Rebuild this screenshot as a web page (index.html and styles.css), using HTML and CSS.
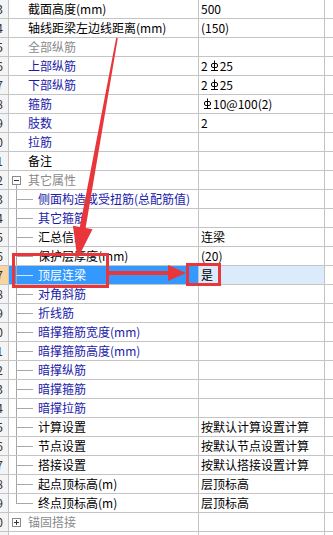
FILE: index.html
```html
<!DOCTYPE html>
<html lang="zh-CN">
<head>
    <meta charset="UTF-8">
    <meta name="viewport" content="width=device-width, initial-scale=1.0">
    <title>连梁属性</title>
    <link rel="stylesheet" href="styles.css">
</head>
<body>
    <div class="page">
        <div class="grid">
            <div class="row"><div class="num">3</div><div class="name">截面高度(mm)</div><div class="val">500</div><div></div></div>
            <div class="row"><div class="num">4</div><div class="name">轴线距梁左边线距离(mm)</div><div class="val">(150)</div><div></div></div>
            <div class="row gray"><div class="num">5</div><div class="name">全部纵筋</div><div class="val"></div><div></div></div>
            <div class="row blue"><div class="num">6</div><div class="name">上部纵筋</div><div class="val">2<svg class="bar" width="9" height="12" viewBox="0 0 9 12"><path d="M4.5 0.5v9.5M1 10.5h7"/><rect x="1.5" y="3.5" width="6" height="4" rx="1.5"/></svg>25</div><div></div></div>
            <div class="row blue"><div class="num">7</div><div class="name">下部纵筋</div><div class="val">2<svg class="bar" width="9" height="12" viewBox="0 0 9 12"><path d="M4.5 0.5v9.5M1 10.5h7"/><rect x="1.5" y="3.5" width="6" height="4" rx="1.5"/></svg>25</div><div></div></div>
            <div class="row blue"><div class="num">8</div><div class="name">箍筋</div><div class="val"><svg class="bar" width="9" height="12" viewBox="0 0 9 12"><path d="M4.5 0.5v9.5M1 10.5h7"/><rect x="1.5" y="3.5" width="6" height="4" rx="1.5"/></svg>10@100(2)</div><div></div></div>
            <div class="row blue"><div class="num">9</div><div class="name">肢数</div><div class="val">2</div><div></div></div>
            <div class="row blue"><div class="num">10</div><div class="name">拉筋</div><div class="val"></div><div></div></div>
            <div class="row"><div class="num">11</div><div class="name">备注</div><div class="val"></div><div></div></div>
            <div class="row gray group"><div class="num">12</div><div class="name"><span class="toggle"><i></i><svg width="9" height="9" viewBox="0 0 9 9"><rect x="0.5" y="0.5" width="8" height="8"/><path d="M2 4.5h5"/></svg><i class="down"></i></span>其它属性</div><div class="val"></div><div></div></div>
            <div class="row blue child"><div class="num">13</div><div class="name"><span class="branch"></span>侧面构造或受扭筋(总配筋值)</div><div class="val"></div><div></div></div>
            <div class="row blue child"><div class="num">14</div><div class="name"><span class="branch"></span>其它箍筋</div><div class="val"></div><div></div></div>
            <div class="row child"><div class="num">15</div><div class="name"><span class="branch"></span>汇总信息</div><div class="val">连梁</div><div></div></div>
            <div class="row child"><div class="num">16</div><div class="name"><span class="branch"></span>保护层厚度(mm)</div><div class="val">(20)</div><div></div></div>
            <div class="row child selected"><div class="num">17</div><div class="name"><span class="branch"></span>顶层连梁</div><div class="val">是</div><div></div></div>
            <div class="row blue child"><div class="num">18</div><div class="name"><span class="branch"></span>对角斜筋</div><div class="val"></div><div></div></div>
            <div class="row blue child"><div class="num">19</div><div class="name"><span class="branch"></span>折线筋</div><div class="val"></div><div></div></div>
            <div class="row blue child"><div class="num">20</div><div class="name"><span class="branch"></span>暗撑箍筋宽度(mm)</div><div class="val"></div><div></div></div>
            <div class="row blue child"><div class="num">21</div><div class="name"><span class="branch"></span>暗撑箍筋高度(mm)</div><div class="val"></div><div></div></div>
            <div class="row blue child"><div class="num">22</div><div class="name"><span class="branch"></span>暗撑纵筋</div><div class="val"></div><div></div></div>
            <div class="row blue child"><div class="num">23</div><div class="name"><span class="branch"></span>暗撑箍筋</div><div class="val"></div><div></div></div>
            <div class="row blue child"><div class="num">24</div><div class="name"><span class="branch"></span>暗撑拉筋</div><div class="val"></div><div></div></div>
            <div class="row child"><div class="num">25</div><div class="name"><span class="branch"></span>计算设置</div><div class="val">按默认计算设置计算</div><div></div></div>
            <div class="row child"><div class="num">26</div><div class="name"><span class="branch"></span>节点设置</div><div class="val">按默认节点设置计算</div><div></div></div>
            <div class="row child"><div class="num">27</div><div class="name"><span class="branch"></span>搭接设置</div><div class="val">按默认搭接设置计算</div><div></div></div>
            <div class="row child"><div class="num">28</div><div class="name"><span class="branch"></span>起点顶标高(m)</div><div class="val">层顶标高</div><div></div></div>
            <div class="row child last"><div class="num">29</div><div class="name"><span class="branch"></span>终点顶标高(m)</div><div class="val">层顶标高</div><div></div></div>
            <div class="row gray group closed"><div class="num">30</div><div class="name"><span class="toggle"><i></i><svg width="9" height="9" viewBox="0 0 9 9"><rect x="0.5" y="0.5" width="8" height="8"/><path d="M2 4.5h5M4.5 2v5"/></svg><i></i></span>锚固搭接</div><div class="val"></div><div></div></div>
            <div class="row"><div class="num">31</div><div class="name"></div><div class="val"></div><div></div></div>
        </div>

        <!-- 红色标注 -->
        <svg class="marks" width="333" height="535" viewBox="0 0 333 535">
            <rect x="13.5" y="254.5" width="94" height="32"/>
            <rect x="187.5" y="264.5" width="32" height="20"/>
            <polygon class="fill" points="109,271 168,271 168,265 186,273 168,281 168,275 109,275"/>
            <polygon class="fill" points="116.2,37.8 117.8,38.2 85.6,227.9 92.5,229.3 77.5,259 72.9,225.7 79.8,227"/>
        </svg>
    </div>
</body>
</html>
```

FILE: styles.css
```css
body {
    margin: 0;
    font-family: "Noto Sans CJK SC", sans-serif;
    font-size: 12px;
    background-color: white;
    color: #000;
}
.page {
    position: relative;
    width: 333px;
    height: 535px;
    overflow: hidden;
}
.grid {
    margin-left: -22px;
}
.row {
    display: grid;
    grid-template-columns: 31px 190px 126px 40px;
    height: 19px;
    line-height: 18px;
    border-bottom: 1px solid #c4c4c4;
    box-sizing: border-box;
}
.row > div {
    box-sizing: border-box;
    border-right: 1px solid #c4c4c4;
    white-space: nowrap;
    overflow: hidden;
}
.num {
    background-color: #f4f4f4;
    text-align: right;
    padding-right: 5px;
    color: #333;
}
.name {
    display: flex;
    align-items: center;
    padding-left: 19px;
}
.val {
    display: flex;
    align-items: center;
    padding-left: 2px;
}
.bar {
    margin: 0 1px 0 2px;
    fill: none;
    stroke: #000;
    stroke-width: 1;
}
.blue .name {
    color: #1a1aa8;
}
.gray .name {
    color: #8a8a8a;
}

/* 树形线 */
.group .name,
.child .name {
    padding-left: 0;
}
.toggle {
    width: 9px;
    margin: 0 7px 0 3px;
    align-self: stretch;
    display: flex;
    flex-direction: column;
    align-items: center;
}
.toggle i {
    flex: 1;
    width: 0;
}
.toggle i.down {
    border-left: 1px solid #a8a8a8;
}
.toggle svg {
    fill: white;
    stroke: #8a8a8a;
}
.toggle svg path {
    stroke: #333;
}
.branch {
    width: 17px;
    margin: 0 5px 0 7px;
    align-self: stretch;
    display: flex;
    flex-direction: column;
}
.branch::before {
    content: '';
    height: 9px;
    border-left: 1px solid #a8a8a8;
    border-bottom: 1px solid #a8a8a8;
}
.branch::after {
    content: '';
    flex: 1;
    border-left: 1px solid #a8a8a8;
}
.last .branch::after {
    border-left: none;
}

/* 选中行 */
.selected .num {
    background-color: #f9d4a0;
}
.selected .name {
    background-color: #3399ff;
    color: white;
}
.selected .branch::before {
    border-bottom-color: #d6e8ff;
}
.selected .val {
    background-color: #dcebfc;
}

.marks {
    position: absolute;
    left: 0;
    top: 0;
    pointer-events: none;
    fill: none;
    stroke: #e8363b;
    stroke-width: 3;
}
.marks .fill {
    fill: #e8363b;
    stroke: none;
}
```
